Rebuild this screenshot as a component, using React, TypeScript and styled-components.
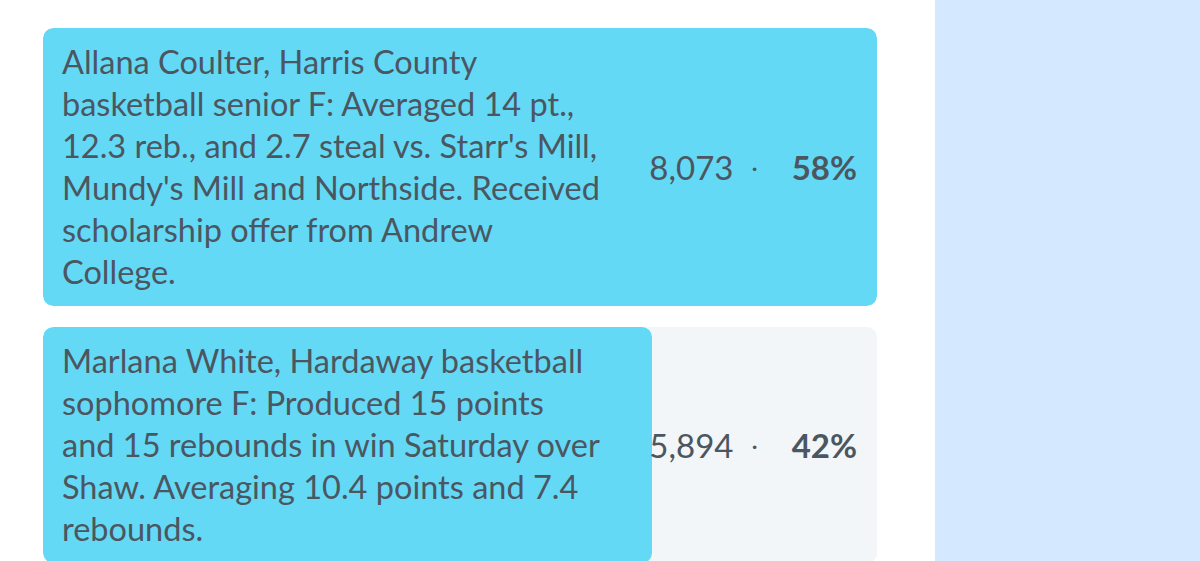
import React from "react";
import styled, { createGlobalStyle } from "styled-components";

const GlobalStyle = createGlobalStyle`
  html, body {
    margin: 0;
    padding: 0;
    background: #ffffff;
  }
  body {
    font-family: "Lato", "Open Sans", sans-serif;
    color: #4b5661;
  }
`;

const results = [
  {
    text: "Allana Coulter, Harris County basketball senior F: Averaged 14 pt., 12.3 reb., and 2.7 steal vs. Starr's Mill, Mundy's Mill and Northside. Received scholarship offer from Andrew College.",
    votes: "8,073",
    pct: 58,
    fill: 100,
  },
  {
    text: "Marlana White, Hardaway basketball sophomore F: Produced 15 points and 15 rebounds in win Saturday over Shaw. Averaging 10.4 points and 7.4 rebounds.",
    votes: "5,894",
    pct: 42,
    fill: 73,
  },
];

function App() {
  return (
    <>
      <GlobalStyle />
      <Page>
        <Main>
          {results.map((r) => (
            <ResultCard key={r.votes}>
              <Fill style={{ width: `${r.fill}%` }} />
              <Label>{r.text}</Label>
              <Stats>
                <Votes>{r.votes}</Votes>
                <Dot>·</Dot>
                <Pct>{r.pct}%</Pct>
              </Stats>
            </ResultCard>
          ))}
        </Main>
        <Side />
      </Page>
    </>
  );
}

export default App;

const Page = styled.div`
  display: flex;
  height: 561px;
  overflow: hidden;
`;

const Main = styled.div`
  width: 834px;
  padding: 28px 58px 0 43px;
  display: flex;
  flex-direction: column;
  gap: 21px;
`;

const Side = styled.div`
  flex: 1;
  background-color: #d4e8ff;
`;

const ResultCard = styled.div`
  position: relative;
  display: flex;
  align-items: center;
  justify-content: space-between;
  padding: 13px 20px 13px 19px;
  border-radius: 10px;
  background-color: #f2f6f8;
  overflow: hidden;
  flex-shrink: 0;
`;

const Fill = styled.div`
  position: absolute;
  top: 0;
  left: 0;
  bottom: 0;
  border-radius: 10px;
  background-color: #64d9f5;
`;

const Label = styled.div`
  position: relative;
  width: 540px;
  font-size: 32.5px;
  line-height: 42px;
  align-self: flex-start;
`;

const Stats = styled.div`
  position: relative;
  display: flex;
  align-items: center;
  font-size: 33px;
  line-height: 42px;
`;

const Votes = styled.span`
  font-weight: 400;
`;

const Dot = styled.span`
  margin: 0 34px 0 18px;
  font-size: 24px;
`;

const Pct = styled.span`
  font-weight: 700;
`;
